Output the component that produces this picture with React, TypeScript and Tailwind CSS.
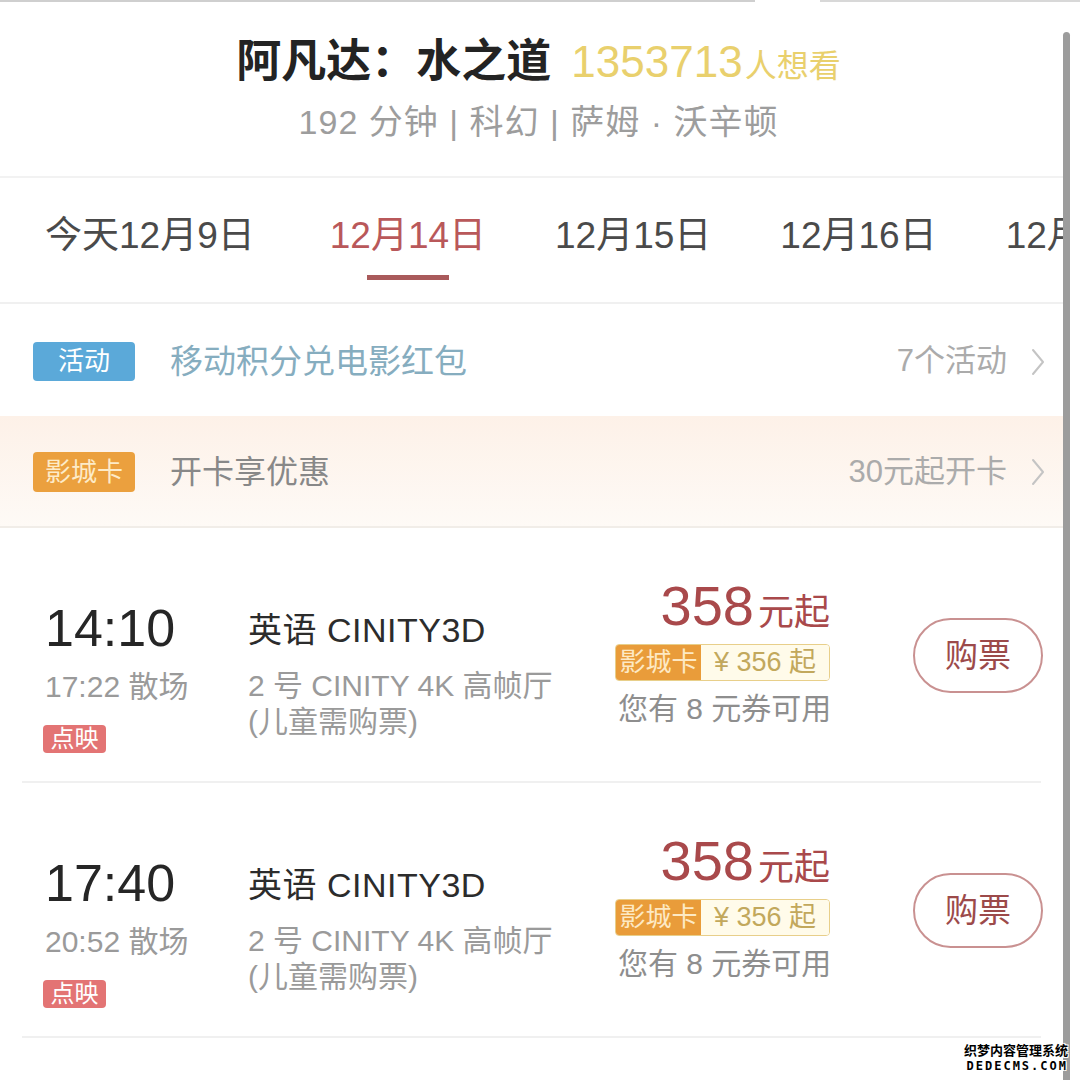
import React from 'react';

const font = { fontFamily: '"Liberation Sans", "Noto Sans CJK SC", sans-serif' };

const dates = [
  { label: '今天12月9日', active: false },
  { label: '12月14日', active: true },
  { label: '12月15日', active: false },
  { label: '12月16日', active: false },
  { label: '12月17日', active: false },
];

const shows = [
  { start: '14:10', end: '17:22' },
  { start: '17:40', end: '20:52' },
];

const Chevron = () => (
  <svg width="14" height="28" viewBox="0 0 14 28" fill="none" className="ml-[24px]">
    <polyline points="2,2 12,14 2,26" stroke="#c4c4c4" strokeWidth="2" strokeLinejoin="round" strokeLinecap="round" />
  </svg>
);

const ShowRow = ({ start, end }: { start: string; end: string }) => (
  <div className="h-[255px] flex flex-col">
    <div className="flex flex-1 items-start">
      <div className="w-[248px] pl-[45px] pt-[74px] flex flex-col items-start">
        <div className="text-[52px] leading-none text-[#262626]">{start}</div>
        <div className="mt-[18px] text-[30px] leading-none text-[#9a9a9a]">{end} 散场</div>
        <div className="mt-[23px] -ml-[2px] h-[28px] w-[63px] rounded-[4px] bg-[#e37474] text-white text-[24px] leading-[28px] text-center">点映</div>
      </div>
      <div className="w-[367px] pt-[85px] flex flex-col">
        <div className="text-[34px] leading-none tracking-[0.5px] text-[#2c2c2c] whitespace-nowrap">英语 CINITY3D</div>
        <div className="mt-[21px] text-[30px] leading-[36px] text-[#9a9a9a] whitespace-nowrap">2 号 CINITY 4K 高帧厅</div>
        <div className="text-[30px] leading-[36px] text-[#9a9a9a]">(儿童需购票)</div>
      </div>
      <div className="w-[215px] pt-[50px] flex flex-col items-end">
        <div className="flex items-baseline leading-none">
          <span className="text-[56px] text-[#a9494b]">358</span>
          <span className="ml-[4px] text-[36px] text-[#a9494b]">元起</span>
        </div>
        <div className="mt-[10px] flex h-[37px] w-[215px] rounded-[4px] border border-[#e8cf8a] overflow-hidden">
          <div className="w-[85px] bg-[#e99c3a] text-[#fde9c4] text-[26px] leading-[35px] text-center">影城卡</div>
          <div className="flex-1 bg-[#fffbea] text-[#c2a85c] text-[27px] leading-[35px] text-center">¥ 356 起</div>
        </div>
        <div className="mt-[13px] w-[215px] pl-[3px] text-[30px] leading-none text-[#8e8e8e] whitespace-nowrap">您有 8 元券可用</div>
      </div>
      <div className="pl-[83px] pt-[90px]">
        <div className="h-[75px] w-[130px] rounded-full border-2 border-[#c99191] flex items-center justify-center text-[33px] text-[#9c4a4a]">购票</div>
      </div>
    </div>
    <div className="mx-[22px] h-[2px] bg-[#f0f0f0]" />
  </div>
);

export default function App() {
  return (
    <div className="relative w-[1080px] h-[1080px] bg-white overflow-hidden" style={font}>
      <div className="flex h-[2px]">
        <div className="w-[755px] bg-[#cfcfcf]" />
        <div className="w-[65px]" />
        <div className="flex-1 bg-[#d8d8d8]" />
      </div>
      <div className="flex">
        <div className="w-[1063px] flex flex-col overflow-hidden">
          {/* header */}
          <div className="h-[176px] pl-[14px] flex flex-col items-center border-b-2 border-[#f2f2f2]">
            <div className="mt-[37px] flex items-baseline leading-none">
              <span className="text-[45px] font-semibold text-[#232323]">阿凡达：水之道</span>
              <span className="ml-[20px] text-[44px] text-[#e9d06d]">1353713</span>
              <span className="ml-[2px] text-[32px] text-[#e9d06d]">人想看</span>
            </div>
            <div className="mt-[21px] text-[34px] leading-none tracking-[1px] text-[#9d9d9d]">192 分钟 | 科幻 | 萨姆 · 沃辛顿</div>
          </div>
          {/* dates */}
          <div className="h-[126px] flex items-start pl-[45px] gap-[69px] border-b-2 border-[#f0f0f0] whitespace-nowrap overflow-hidden">
            {dates.map((d, i) => (
              <div key={d.label} className={`h-full shrink-0 flex flex-col items-center ${i === 0 ? 'mr-[6px]' : ''}`}>
                <div className={`mt-[39px] text-[37px] leading-none ${d.active ? 'text-[#b9585a]' : 'text-[#4a4a4a]'}`}>{d.label}</div>
                {d.active && <div className="mt-[21px] h-[5px] w-[82px] bg-[#a95a5b]" />}
              </div>
            ))}
          </div>
          {/* activity */}
          <div className="h-[112px] flex items-center pt-[3px] pl-[33px] pr-[18px]">
            <div className="h-[39px] w-[102px] rounded-[4px] bg-[#5ba9d9] text-white text-[26px] leading-[39px] text-center">活动</div>
            <div className="ml-[35px] text-[33px] text-[#86adbf]">移动积分兑电影红包</div>
            <div className="ml-auto text-[31px] text-[#ababab]">7个活动</div>
            <Chevron />
          </div>
          {/* cinema card */}
          <div className="h-[112px] flex items-center pt-[2px] pl-[33px] pr-[18px] bg-gradient-to-b from-[#fdf1e8] to-[#fefaf6] border-b-2 border-[#f1ede8]">
            <div className="h-[40px] w-[102px] rounded-[4px] bg-[#eba03e] text-[#fdebc8] text-[26px] leading-[40px] text-center">影城卡</div>
            <div className="ml-[35px] text-[32px] text-[#888888]">开卡享优惠</div>
            <div className="ml-auto text-[31px] text-[#ababab]">30元起开卡</div>
            <Chevron />
          </div>
          {shows.map((s) => (
            <ShowRow key={s.start} start={s.start} end={s.end} />
          ))}
        </div>
        <div className="w-[7px] mt-[30px] h-[1050px] rounded-t-full bg-[#9c9c9c]" />
        <div className="flex-1" />
      </div>
      <div className="absolute right-[12px] bottom-[8px] flex flex-col items-end leading-none font-bold text-black" style={{ textShadow: '1px 1px 0 #fff, -1px -1px 0 #fff, 1px -1px 0 #fff, -1px 1px 0 #fff' }}>
        <div className="text-[13px]">织梦内容管理系统</div>
        <div className="mt-[3px] text-[12px] tracking-[2px]" style={{ fontFamily: '"DejaVu Sans Mono", monospace' }}>DEDECMS.COM</div>
      </div>
    </div>
  );
}
